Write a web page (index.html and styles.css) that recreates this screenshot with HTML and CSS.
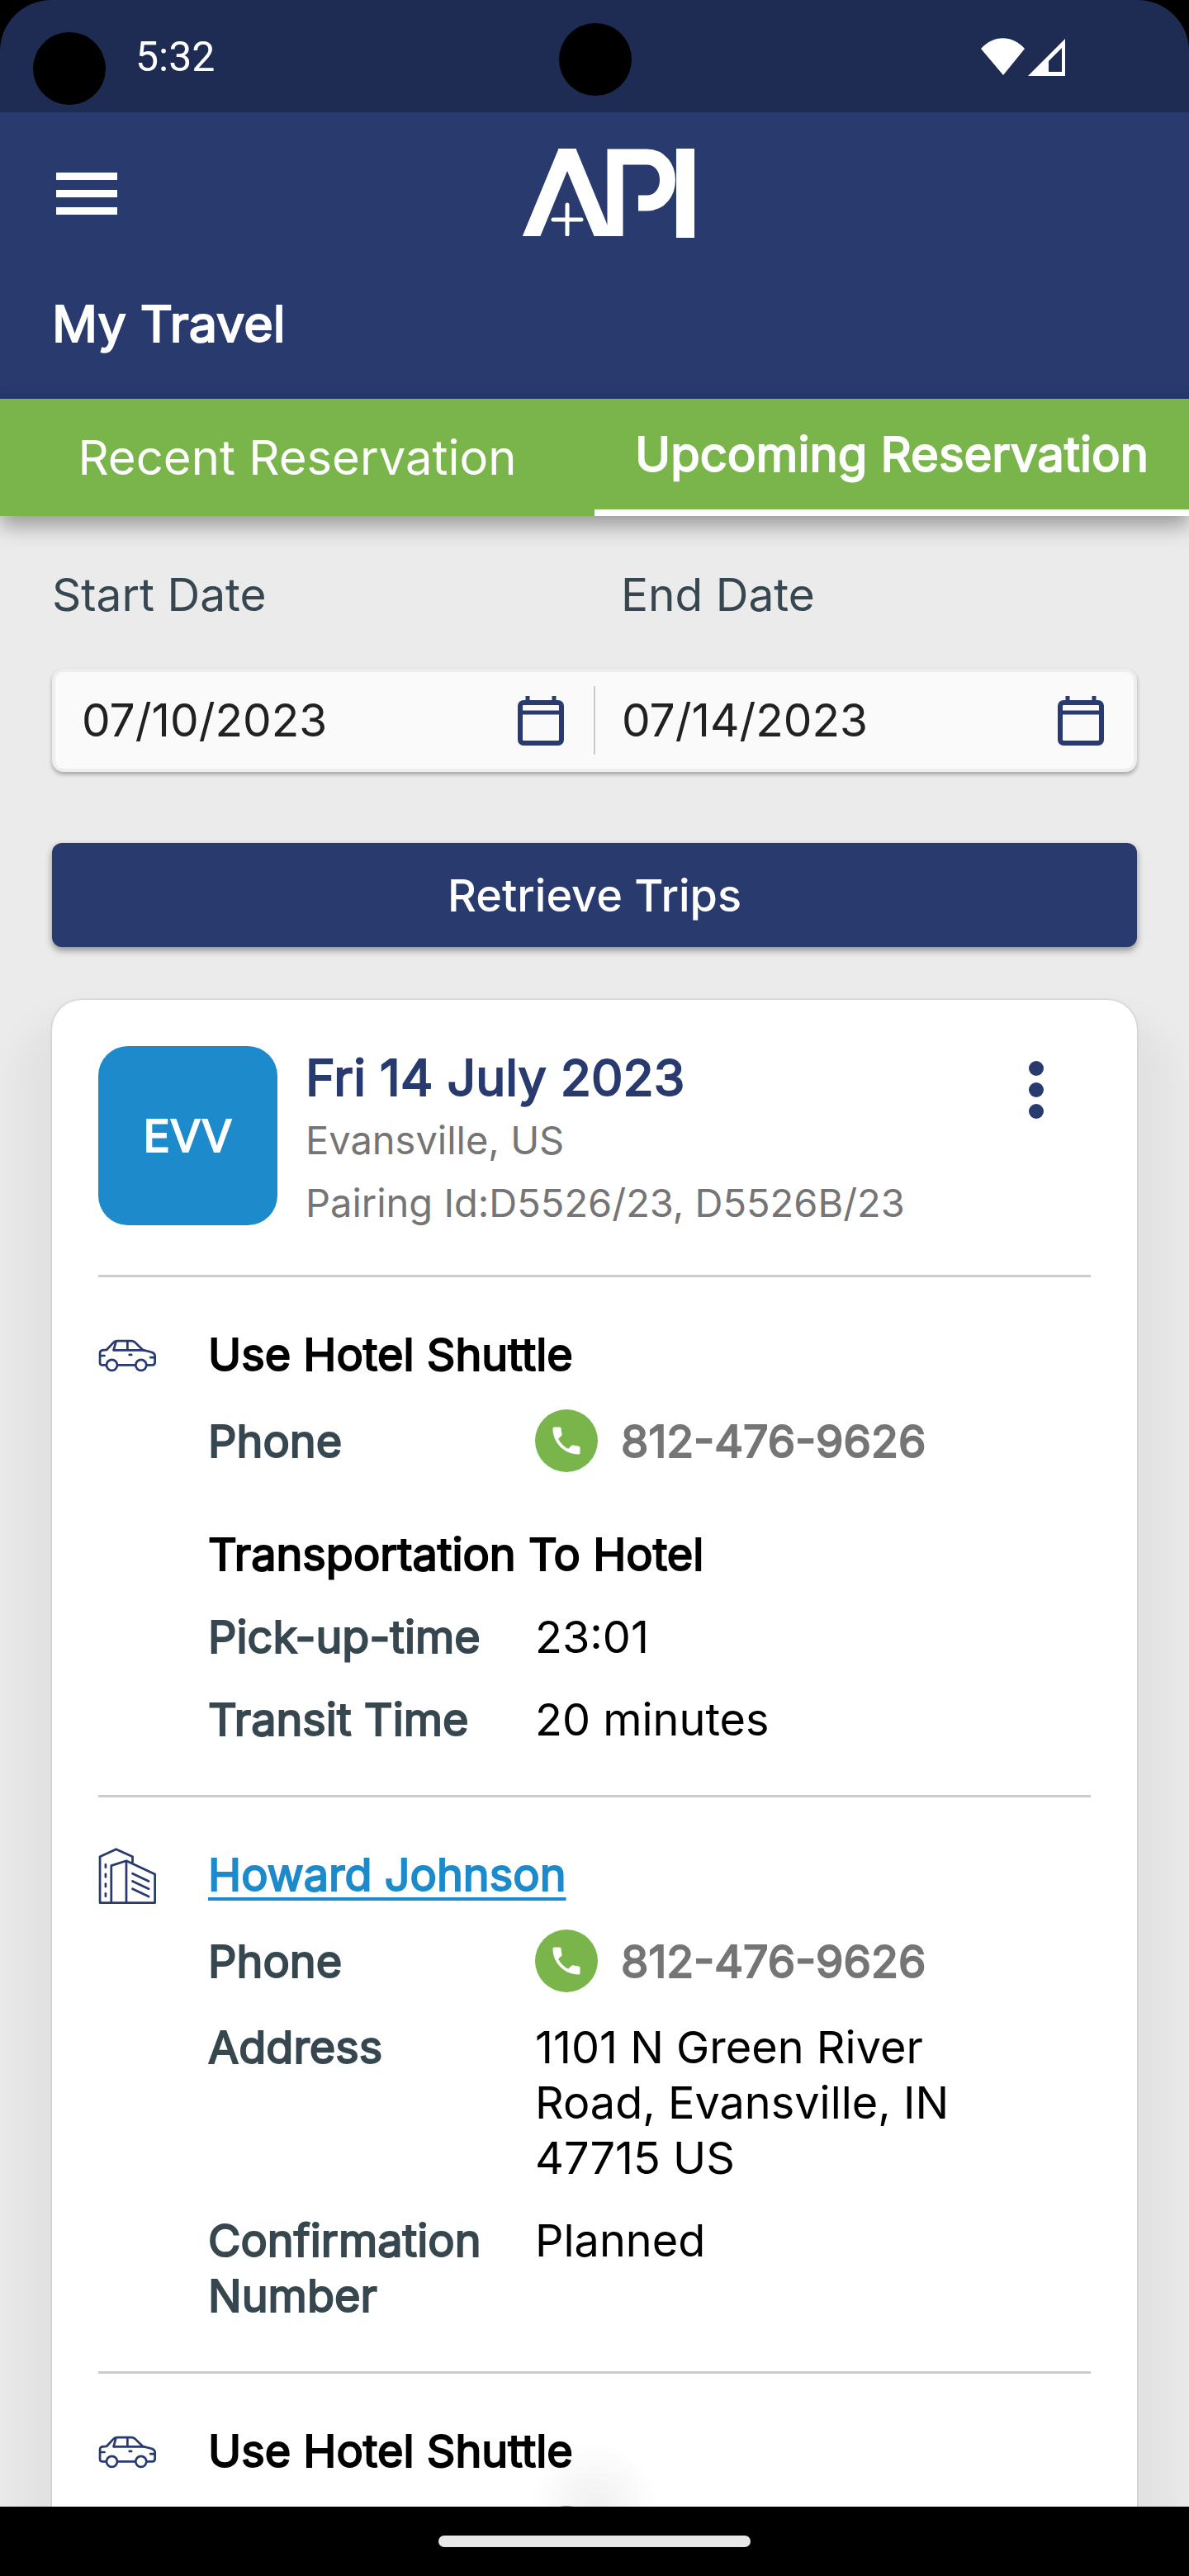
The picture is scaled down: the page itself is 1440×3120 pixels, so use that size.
FILE: index.html
```html
<!DOCTYPE html>
<html lang="en">
<head>
  <meta charset="UTF-8" />
  <title>API - My Travel</title>
  <meta name="viewport" content="width=device-width, initial-scale=1.0" />
  <link rel="stylesheet" href="styles.css">
</head>
<body>

  <!-- Shared icons -->
  <svg class="icon-defs" aria-hidden="true">
    <symbol id="icon-calendar" viewBox="0 0 56 62">
      <path d="M7 9h42a4 4 0 0 1 4 4v41a4 4 0 0 1-4 4H7a4 4 0 0 1-4-4V13a4 4 0 0 1 4-4z" fill="none" stroke="currentColor" stroke-width="6" />
      <path d="M3 21h50M12 1v8M44 1v8" fill="none" stroke="currentColor" stroke-width="5" />
    </symbol>
    <symbol id="icon-car" viewBox="36 12 204 204">
      <g fill="none" stroke="currentColor" stroke-width="8" stroke-linecap="round" stroke-linejoin="round">
        <path d="M63 147H49q-7 0-7-8V105q0-9 9-10l15-2L88 69q6-7 14-7h50q8 0 14 5l28 27 28 7q14 3 14 14v22q0 10-10 10h-16M104 147h62" />
        <path d="M98 66 90 95h104M139 64v30M44 114h14M220 120h14M146 111h7" />
        <circle cx="84" cy="147" r="19" />
        <circle cx="187" cy="147" r="19" />
      </g>
    </symbol>
    <symbol id="icon-hotel" viewBox="36 36 204 204">
      <g fill="none" stroke="currentColor" stroke-width="8" stroke-linecap="round" stroke-linejoin="round">
        <path d="M42 233V70l57-26 58 26v20M42 233h194V132L135 85l-53 17v131M135 85v148" />
        <path d="M62 98v10M62 132v10M62 166v10M62 200v10M157 130l57 27M157 157l57 27M157 184l57 27" />
      </g>
    </symbol>
    <symbol id="icon-phone" viewBox="0 0 24 24">
      <path d="M20 15.5c-1.25 0-2.45-.2-3.57-.57a1 1 0 0 0-1.02.24l-2.2 2.2a15.05 15.05 0 0 1-6.59-6.59l2.2-2.21a.96.96 0 0 0 .25-1A11.36 11.36 0 0 1 8.5 4c0-.55-.45-1-1-1H4c-.55 0-1 .45-1 1 0 9.39 7.61 17 17 17 .55 0 1-.45 1-1v-3.5c0-.55-.45-1-1-1z" fill="currentColor" />
    </symbol>
  </svg>

  <div class="screen">

    <!-- Status bar -->
    <div class="status-bar">
      <span class="punch-hole punch-left"></span>
      <span class="clock">5:32</span>
      <span class="punch-hole punch-center"></span>
      <svg class="signal-icons" viewBox="0 0 102 46" aria-hidden="true">
        <path d="M0 13C15-4 38-4 53 13L27 45z" fill="#fff" />
        <path d="M102 1v45H57zM98 12 82 28v13h16z" fill="#fff" fill-rule="evenodd" />
      </svg>
    </div>

    <!-- Header -->
    <header class="app-header">
      <div class="header-row">
        <button class="menu-button" aria-label="Menu">
          <span></span>
          <span></span>
          <span></span>
        </button>
        <svg class="logo" viewBox="0 0 208 108" role="img" aria-label="API">
          <clipPath id="logo-clip"><rect width="186" height="106" /></clipPath>
          <g fill="none" stroke="#fff" clip-path="url(#logo-clip)">
            <path d="M6.500 116 58.500-10M49.500-10 101.500 116" stroke-width="20" />
            <path d="M112 106V10h38c34 0 34 56 0 56h-10" stroke-width="19" />
            <path d="M37 86h34M54 68v36" stroke-width="5" stroke-linecap="round" />
          </g>
          <rect x="186" width="22" height="108" fill="#fff" />
        </svg>
      </div>
      <h1>My Travel</h1>
    </header>

    <!-- Tabs -->
    <nav class="tabs" role="tablist">
      <button class="tab" role="tab" aria-selected="false">Recent Reservation</button>
      <button class="tab active" role="tab" aria-selected="true">Upcoming Reservation</button>
    </nav>

    <main class="content">

      <!-- Date range -->
      <div class="date-labels">
        <label for="start-date">Start Date</label>
        <label for="end-date">End Date</label>
      </div>
      <div class="date-range">
        <div class="date-field">
          <input type="text" id="start-date" value="07/10/2023">
          <button class="calendar-button" aria-label="Pick start date"><svg><use href="#icon-calendar" /></svg></button>
        </div>
        <div class="date-field">
          <input type="text" id="end-date" value="07/14/2023">
          <button class="calendar-button" aria-label="Pick end date"><svg><use href="#icon-calendar" /></svg></button>
        </div>
      </div>

      <button class="retrieve-button">Retrieve Trips</button>

      <!-- Trip card -->
      <article class="trip-card">
        <div class="trip-header">
          <div class="airport-code">EVV</div>
          <div class="trip-info">
            <h2>Fri 14 July 2023</h2>
            <p>Evansville, US</p>
            <p>Pairing Id:D5526/23, D5526B/23</p>
          </div>
          <button class="more-button" aria-label="More options">
            <span></span>
            <span></span>
            <span></span>
          </button>
        </div>

        <section class="trip-section">
          <svg class="section-icon"><use href="#icon-car" /></svg>
          <div class="section-body">
            <h3>Use Hotel Shuttle</h3>
            <dl>
              <dt>Phone</dt>
              <dd class="phone">
                <a class="call-button" href="tel:8124769626" aria-label="Call"><svg><use href="#icon-phone" /></svg></a>
                812-476-9626
              </dd>
            </dl>
            <h3 class="sub-title">Transportation To Hotel</h3>
            <dl>
              <dt>Pick-up-time</dt>
              <dd>23:01</dd>
              <dt>Transit Time</dt>
              <dd>20 minutes</dd>
            </dl>
          </div>
        </section>

        <section class="trip-section">
          <svg class="section-icon"><use href="#icon-hotel" /></svg>
          <div class="section-body">
            <h3><a class="hotel-link" href="#">Howard Johnson</a></h3>
            <dl>
              <dt>Phone</dt>
              <dd class="phone">
                <a class="call-button" href="tel:8124769626" aria-label="Call"><svg><use href="#icon-phone" /></svg></a>
                812-476-9626
              </dd>
              <dt>Address</dt>
              <dd>1101 N Green River Road, Evansville, IN 47715 US</dd>
              <dt>Confirmation Number</dt>
              <dd>Planned</dd>
            </dl>
          </div>
        </section>

        <section class="trip-section">
          <svg class="section-icon"><use href="#icon-car" /></svg>
          <div class="section-body">
            <h3>Use Hotel Shuttle</h3>
            <dl>
              <dt></dt>
              <dd class="phone">
                <a class="call-button" href="tel:8124769626" aria-label="Call"><svg><use href="#icon-phone" /></svg></a>
              </dd>
            </dl>
          </div>
        </section>
      </article>
    </main>

    <!-- Gesture bar -->
    <footer class="gesture-bar">
      <span></span>
    </footer>

  </div>

</body>
</html>
```
FILE: styles.css
```css
:root {
  --navy: #283a6e;
  --navy-dark: #1e2c54;
  --green: #7ab54c;
  --blue: #1c8acb;
  --slate: #37474f;
  --grey: #757575;
  --line: #cccccc;
}

* {
  box-sizing: border-box;
  margin: 0;
  padding: 0;
}

body {
  font-family: Inter, Roboto, sans-serif;
  font-size: 54px;
  line-height: 67px;
  background-color: #000;
  color: #000;
}

button {
  font: inherit;
  border: none;
  background: none;
  cursor: pointer;
}

h1, h2, h3 {
  font-size: 61px;
  font-weight: 400;
}

/* faux bold, keeps the regular letter widths */
h1, h2, h3, dt, .phone, .tab.active, .airport-code {
  -webkit-text-stroke: 2px currentColor;
}

.icon-defs {
  position: absolute;
  width: 0;
  height: 0;
}

.screen {
  display: flex;
  flex-direction: column;
  height: 100vh;
}

/* Status bar */
.status-bar {
  position: relative;
  display: flex;
  justify-content: space-between;
  align-items: center;
  flex-shrink: 0;
  height: 136px;
  padding: 2px 150px 0 164px;
  background-color: var(--navy-dark);
  border-radius: 62px 62px 0 0;
  color: #fff;
}

.clock {
  font-family: Roboto, sans-serif;
  font-size: 50px;
}

.punch-hole {
  position: absolute;
  width: 88px;
  height: 88px;
  border-radius: 50%;
  background-color: #000;
}

.punch-left {
  top: 39px;
  left: 40px;
}

.punch-center {
  top: 28px;
  left: calc(50% - 43px);
}

.signal-icons {
  width: 102px;
  height: 46px;
}

/* Header */
.app-header {
  flex-shrink: 0;
  height: 347px;
  padding: 44px 63px 0;
  background-color: var(--navy);
  color: #fff;
}

.header-row {
  display: grid;
  grid-template-columns: 1fr auto 1fr;
  align-items: center;
}

.menu-button {
  display: flex;
  flex-direction: column;
  gap: 12px;
  width: 84px;
  padding: 5px;
}

.menu-button span {
  height: 9px;
  background-color: #fff;
}

.logo {
  width: 208px;
  height: 108px;
  margin-left: 34px;
}

.app-header h1 {
  margin-top: 68px;
  line-height: 72px;
}

/* Tabs */
.tabs {
  position: relative;
  display: flex;
  flex-shrink: 0;
  height: 142px;
  background-color: var(--green);
  box-shadow: 0 12px 24px rgba(0, 0, 0, 0.35);
}

.tab {
  flex: 1;
  color: #fff;
  font-size: 58px;
  white-space: nowrap;
}

.tab.active {
  border-bottom: 8px solid #fff;
}

/* Content */
.content {
  flex: 1;
  min-height: 0;
  overflow: hidden;
  padding: 62px 63px 0;
  background-color: #ebebeb;
}

.date-labels {
  display: grid;
  grid-template-columns: 1fr 1fr;
  column-gap: 64px;
  margin-bottom: 56px;
  color: var(--slate);
  font-size: 55px;
}

.date-range {
  display: flex;
  height: 125px;
  padding: 17px 0;
  border: 4px solid #eee;
  border-radius: 14px;
  background-color: #fafafa;
  box-shadow: 0 3px 5px rgba(0, 0, 0, 0.3);
}

.date-field {
  display: flex;
  flex: 1;
  align-items: center;
  justify-content: space-between;
  padding: 0 36px 0 32px;
}

.date-field + .date-field {
  border-left: 2px solid var(--line);
}

.date-field input {
  width: 400px;
  border: none;
  background: none;
  color: #212121;
  font: inherit;
  font-size: 55px;
}

.calendar-button {
  height: 62px;
  color: var(--navy);
}

.calendar-button svg {
  display: block;
  width: 56px;
  height: 62px;
}

.retrieve-button {
  display: block;
  width: 100%;
  height: 126px;
  margin: 86px 0 64px;
  border-radius: 12px;
  background-color: var(--navy);
  box-shadow: 0 4px 8px rgba(0, 0, 0, 0.4);
  color: #fff;
  font-weight: 500;
}

/* Trip card */
.trip-card {
  padding: 56px 56px 60px;
  border-radius: 36px;
  background-color: #fff;
  box-shadow: 0 0 3px rgba(0, 0, 0, 0.25), 0 60px 40px 44px rgba(0, 0, 0, 0.04);
}

.trip-header {
  display: flex;
  align-items: flex-start;
  padding-bottom: 49px;
}

.airport-code {
  display: flex;
  align-items: center;
  justify-content: center;
  width: 217px;
  height: 217px;
  margin-right: 34px;
  border-radius: 36px;
  background-color: var(--blue);
  color: #fff;
}

.trip-info {
  flex: 1;
}

.trip-info h2 {
  color: var(--navy);
  line-height: 76px;
}

.trip-info p {
  color: var(--grey);
  font-size: 47px;
  line-height: 76px;
}

.more-button {
  display: flex;
  flex-direction: column;
  gap: 8px;
  padding: 18px 57px;
}

.more-button span {
  width: 18px;
  height: 18px;
  border-radius: 50%;
  background-color: var(--navy);
}

.trip-section {
  display: grid;
  grid-template-columns: 133px 1fr;
  padding: 60px 0 58px;
  border-top: 3px solid var(--line);
}

.section-icon {
  width: 70px;
  height: 70px;
  color: var(--navy);
}

.section-body h3 {
  font-size: 54px;
}

.section-body dl {
  display: grid;
  grid-template-columns: 396px 1fr;
  row-gap: 33px;
  margin-top: 33px;
}

.section-body dt {
  align-self: start;
  color: var(--slate);
}

.section-body dd {
  padding-right: 80px;
}

.section-body .sub-title {
  margin-top: 66px;
}

.section-body dt:has(+ .phone) {
  align-self: center;
}

.section-body .phone {
  display: flex;
  align-items: center;
  gap: 28px;
  color: var(--grey);
}

.hotel-link {
  color: var(--blue);
  text-decoration: underline;
  text-decoration-thickness: 4px;
  text-underline-offset: 8px;
}

.call-button {
  display: flex;
  align-items: center;
  justify-content: center;
  width: 76px;
  height: 76px;
  border-radius: 50%;
  background-color: var(--green);
  color: #fff;
}

.call-button svg {
  width: 44px;
  height: 44px;
}

/* Gesture bar */
.gesture-bar {
  position: relative;
  display: flex;
  align-items: center;
  justify-content: center;
  flex-shrink: 0;
  height: 84px;
  background-color: #000;
}

.gesture-bar::before {
  content: "";
  position: absolute;
  bottom: 100%;
  left: calc(50% - 80px);
  width: 160px;
  height: 80px;
  background: radial-gradient(ellipse at bottom, rgba(0, 0, 0, 0.06), transparent 70%);
}

.gesture-bar span {
  width: 378px;
  height: 14px;
  border-radius: 7px;
  background-color: #e8e8e8;
}
```
